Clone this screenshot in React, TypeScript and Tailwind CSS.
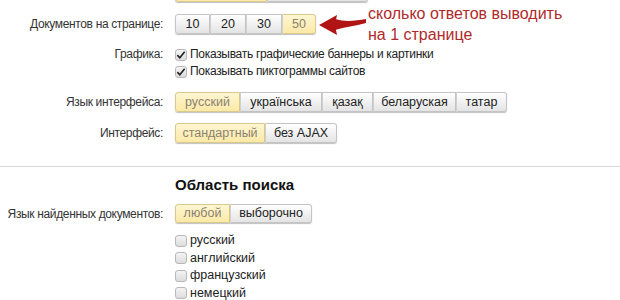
import React from "react";

type Btn = { t: string; w: number; on?: boolean };

function Group({ items, h = 20 }: { items: Btn[]; h?: number }) {
  return (
    <div className="flex rounded-[3px] shadow-[0_1px_1px_rgba(0,0,0,0.25)]" style={{ height: h }}>
      {items.map((b, i) => (
        <div
          key={i}
          style={{ width: b.w }}
          className={
            "flex items-center justify-center whitespace-nowrap border border-[#c4c4c4] text-[12.5px] " +
            (i > 0 ? "border-l-[#d0d0d0] " : "") +
            (i === 0 ? "rounded-l-[3px] " : "") +
            (i === items.length - 1 ? "rounded-r-[3px] " : "") +
            (b.on
              ? "bg-gradient-to-b from-[#fff6d2] to-[#fbe9a6] text-[#8a8270] border-[#d9c98c]"
              : "bg-gradient-to-b from-[#ffffff] to-[#e4e4e4] text-[#222]")
          }
        >
          {b.t}
        </div>
      ))}
    </div>
  );
}

function Check({ on }: { on?: boolean }) {
  return (
    <span className="inline-flex h-[12px] w-[12px] shrink-0 items-center justify-center rounded-[3px] border border-[#b8b8b8] bg-gradient-to-b from-[#f4f4f4] to-[#dcdcdc]">
      {on && (
        <svg width="11" height="10" viewBox="0 0 11 10">
          <path d="M1.5 5.2 L4.2 8 L9.5 1.5" fill="none" stroke="#222" strokeWidth="1.8" />
        </svg>
      )}
    </span>
  );
}

function Row({ label, children, className = "" }: { label: string; children: React.ReactNode; className?: string }) {
  return (
    <div className={"flex " + className}>
      <div className="w-[163px] shrink-0 whitespace-nowrap text-right text-[12px] tracking-[-0.35px] text-[#333]">{label}</div>
      <div className="ml-[12px]">{children}</div>
    </div>
  );
}

export default function App() {
  return (
    <div
      className="relative h-[300px] w-[620px] overflow-hidden bg-white text-[12px] text-[#222]"
      style={{ fontFamily: '"Liberation Sans", Arial, sans-serif' }}
    >
      <div className="mt-[-18px] flex h-[20px]">
        <div className="ml-[175px]">
          <Group items={[{ t: "", w: 92, on: true }, { t: "", w: 101 }]} />
        </div>
      </div>

      <Row label="Документов на странице:" className="mt-[12px] h-[20px] items-center">
        <Group
          items={[
            { t: "10", w: 35 },
            { t: "20", w: 36 },
            { t: "30", w: 36 },
            { t: "50", w: 34, on: true },
          ]}
        />
      </Row>

      <Row label="Графика:" className="mt-[12px] leading-[17px]">
        <div className="flex flex-col tracking-[-0.3px]">
          <div className="flex h-[17px] items-center gap-[3px] whitespace-nowrap">
            <Check on />
            <span>Показывать графические баннеры и картинки</span>
          </div>
          <div className="flex h-[17px] items-center gap-[3px] whitespace-nowrap">
            <Check on />
            <span>Показывать пиктограммы сайтов</span>
          </div>
        </div>
      </Row>

      <Row label="Язык интерфейса:" className="mt-[12px] h-[20px] items-center">
        <Group
          items={[
            { t: "русский", w: 65, on: true },
            { t: "українська", w: 82 },
            { t: "қазақ", w: 51 },
            { t: "беларуская", w: 83 },
            { t: "татар", w: 51 },
          ]}
        />
      </Row>

      <Row label="Интерфейс:" className="mt-[11px] h-[20px] items-center">
        <Group
          items={[
            { t: "стандартный", w: 90, on: true },
            { t: "без AJAX", w: 72 },
          ]}
        />
      </Row>

      <div className="mt-[23px] h-[1px] bg-[#d8d8d8]" />

      <div className="ml-[175px] mt-[8px] h-[20px] text-[15px] font-bold leading-[20px] text-[#111]">
        Область поиска
      </div>

      <Row label="Язык найденных документов:" className="mt-[9px] h-[19px] items-center">
        <Group
          h={19}
          items={[
            { t: "любой", w: 55, on: true },
            { t: "выборочно", w: 82 },
          ]}
        />
      </Row>

      <div className="ml-[175px] mt-[9px] flex flex-col">
        {["русский", "английский", "французский", "немецкий"].map((l) => (
          <div key={l} className="flex h-[17.5px] items-center gap-[3px] text-[12.5px]">
            <Check />
            <span>{l}</span>
          </div>
        ))}
      </div>

      {/* annotation */}
      <svg className="absolute left-[317px] top-[13px]" width="52" height="24" viewBox="0 0 52 24">
        <path d="M18 6 C28 9 38 8 49 6 L49 10 C38 13 28 14 18 17 Z" fill="#b01414" />
        <path d="M2 12 L20 2 L18 12 L20 22 Z" fill="#b01414" />
      </svg>
      <div className="absolute left-[368px] top-[3px] text-[16px] leading-[21px] text-[#b02a2a]">
        <div>сколько ответов выводить</div>
        <div>на 1 странице</div>
      </div>
    </div>
  );
}
